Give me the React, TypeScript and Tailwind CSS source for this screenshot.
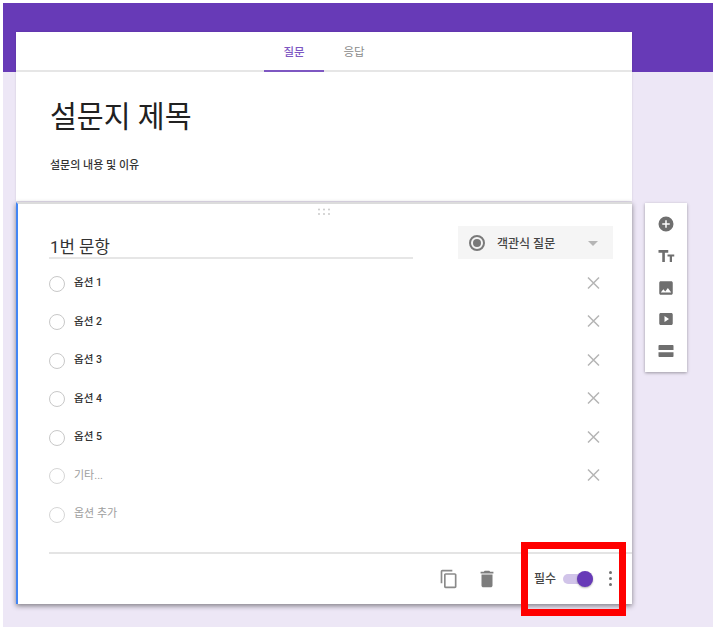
const kr = "font-['Roboto','Noto_Sans_CJK_KR',sans-serif]";

function Radio({ light }: { light?: boolean }) {
  return <span className={`h-[16px] w-[16px] shrink-0 rounded-full border-[1.5px] ${light ? "border-[#d6d6d6]" : "border-[#c8c8c8]"}`} />;
}

function Close() {
  return (
    <svg width="24" height="24" viewBox="0 0 24 24" className="shrink-0">
      <path d="M7 5.500 L18 16.500 M18 5.500 L7 16.500" stroke="#b5b5b5" strokeWidth="1.5" fill="none" />
    </svg>
  );
}

function Option({ label, muted, close = true }: { label: string; muted?: boolean; close?: boolean }) {
  return (
    <div className="flex h-[38.5px] items-center">
      <Radio light={muted} />
      <span className={`ml-[9px] -mt-[1px] flex-1 ${muted ? "text-[11px] text-[#9e9e9e]" : "text-[10.5px] font-medium text-[#333333]"}`}>{label}</span>
      {close && <Close />}
    </div>
  );
}

function Tool({ children }: { children: React.ReactNode }) {
  return <svg width="18" height="18" viewBox="0 0 24 24" fill="#6f6f6f">{children}</svg>;
}

export default function App() {
  return (
    <div className={`relative h-[631px] w-[713px] overflow-hidden bg-white pb-[4px] pl-[3px] pt-[3px] ${kr}`}>
      <div className="h-full bg-[#ede7f6]">
        <div className="h-[69px] bg-[#673ab7]" />
        <div className="-mt-[40px] flex items-start pl-[13px]">
          <div className="w-[616px]">
            <div className="bg-white shadow-[0_0_2px_rgba(0,0,0,0.12)]">
              <div className="flex h-[40px] justify-center border-b-2 border-[#e6e6e6]">
                <div className="-mb-[2px] flex w-[60px] items-center justify-center border-b-2 border-[#7e57c2] pt-[4px] text-[11.5px] font-medium text-[#7e57c2]">질문</div>
                <div className="flex w-[60px] items-center justify-center pt-[4px] text-[11.5px] text-[#8a8a8a]">응답</div>
              </div>
              <div className="h-[129px] px-[34px] pt-[26px]">
                <div className="text-[29.2px] leading-[38px] text-[#212121]">설문지 제목</div>
                <div className="mt-[23px] text-[11px] font-medium leading-[14px] text-[#333333]">설문의 내용 및 이유</div>
              </div>
            </div>
            <div className="mt-px flex h-[402px] flex-col border-l-2 border-[#4285f4] border-t-2 border-t-[#dcdcdc] bg-white pl-[31px] pr-[19px] shadow-[0_2px_5px_rgba(0,0,0,0.45)]">
              <div className="-ml-[15px] flex h-[4px] justify-center pt-[4px]">
                <svg width="14" height="8" viewBox="0 0 14 8" fill="#c4c4c4" className="shrink-0">
                  <circle cx="2" cy="1.500" r="0.9" /><circle cx="7" cy="1.500" r="0.9" /><circle cx="12" cy="1.500" r="0.9" />
                  <circle cx="2" cy="6" r="0.9" /><circle cx="7" cy="6" r="0.9" /><circle cx="12" cy="6" r="0.9" />
                </svg>
              </div>
              <div className="mt-[18px] flex items-start">
                <div className="h-[33px] w-[364px] border-b-2 border-[#e6e6e6] pl-px pt-[10px] text-[16.800px] leading-[22px] text-[#333333]">1번 문항</div>
                <div className="ml-[45px] flex h-[33px] w-[155px] items-center bg-[#f5f5f5] pl-[11px] pr-[15px]">
                  <span className="flex h-[16px] w-[16px] items-center justify-center rounded-full border-2 border-[#7a7a7a]">
                    <span className="h-[8px] w-[8px] rounded-full bg-[#7a7a7a]" />
                  </span>
                  <span className="ml-[12px] mt-[2px] flex-1 text-[12px] font-medium text-[#444444]">객관식 질문</span>
                  <span className="mt-[1px] h-0 w-0 border-x-[5px] border-t-[5px] border-x-transparent border-t-[#b5b5b5]" />
                </div>
              </div>
              <div className="mt-[5.500px] pr-[8px]">
                <Option label="옵션 1" />
                <Option label="옵션 2" />
                <Option label="옵션 3" />
                <Option label="옵션 4" />
                <Option label="옵션 5" />
                <Option label="기타..." muted />
                <Option label="옵션 추가" muted close={false} />
              </div>
              <div className="-mr-[19px] mt-[17.500px] border-t-2 border-[#e4e4e4]" />
              <div className="flex flex-1 items-center">
                <div className="flex-1" />
                <svg width="20" height="20" viewBox="0 0 24 24" fill="#8a8a8a" className="mr-[17px]">
                  <path d="M16 1H4c-1.100 0-2 .9-2 2v14h2V3h12V1zm3 4H8c-1.100 0-2 .9-2 2v14c0 1.100.9 2 2 2h11c1.100 0 2-.9 2-2V7c0-1.100-.9-2-2-2zm0 16H8V7h11v14z" />
                </svg>
                <svg width="22" height="22" viewBox="0 0 24 24" fill="#7d7d7d" className="mr-[36px]">
                  <path d="M6 19c0 1.100.9 2 2 2h8c1.100 0 2-.9 2-2V7H6v12zM19 4h-3.500l-1-1h-5l-1 1H5v2h14V4z" />
                </svg>
                <span className="text-[12px] font-medium text-[#444444]">필수</span>
                <span className="relative ml-[7px] h-[10px] w-[30px] rounded-full bg-[#d1c4e9]">
                  <span className="absolute -top-[3px] right-0 h-[16px] w-[16px] rounded-full bg-[#673ab7] shadow-[0_1px_2px_rgba(0,0,0,0.3)]" />
                </span>
                <span className="ml-[16px] flex flex-col gap-[3px]">
                  <span className="h-[3px] w-[3px] rounded-full bg-[#6f6f6f]" />
                  <span className="h-[3px] w-[3px] rounded-full bg-[#6f6f6f]" />
                  <span className="h-[3px] w-[3px] rounded-full bg-[#6f6f6f]" />
                </span>
                <span className="w-px" />
              </div>
            </div>
          </div>
          <div className="ml-[13px] mt-[171px] flex h-[169px] w-[42px] flex-col items-center justify-between bg-white py-[12px] shadow-[0_1px_3px_rgba(0,0,0,0.35)]">
            <Tool><path d="M12 2a10 10 0 1 0 0 20 10 10 0 0 0 0-20zm5 11h-4v4h-2v-4H7v-2h4V7h2v4h4v2z" /></Tool>
            <Tool><path d="M2 4h13v3.500h-4.500V20H7V7.500H2V4zm12 6h9v2.500h-3V20h-3v-7.500h-3V10z" /></Tool>
            <Tool><path d="M21 19V5c0-1.100-.9-2-2-2H5c-1.100 0-2 .9-2 2v14c0 1.100.9 2 2 2h14c1.100 0 2-.9 2-2zM8.500 13.500l2.500 3 3.500-4.500 4.500 6H5l3.500-4.500z" /></Tool>
            <Tool><path d="M5 4h14c1.100 0 2 .9 2 2v12c0 1.100-.9 2-2 2H5c-1.100 0-2-.9-2-2V6c0-1.100.9-2 2-2zm5 4v8l6-4-6-4z" /></Tool>
            <Tool><path d="M3 4h18c.5 0 1 .5 1 1v5.500H2V5c0-.5.5-1 1-1zM2 13.500h20V19c0 .5-.5 1-1 1H3c-.5 0-1-.5-1-1v-5.500z" /></Tool>
          </div>
        </div>
      </div>
      <div className="absolute left-[521px] top-[542px] h-[74px] w-[105px] border-[7px] border-[#ff0000]" />
    </div>
  );
}
